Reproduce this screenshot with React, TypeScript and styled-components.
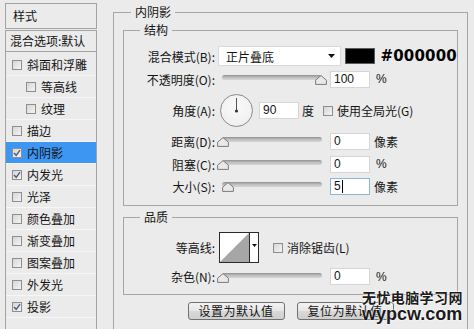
import React from "react";
import styled, { createGlobalStyle } from "styled-components";

const Global = createGlobalStyle`
  html, body { margin: 0; padding: 0; background: #ebebeb; }
  body {
    font-family: "Noto Sans CJK SC", "Liberation Sans", sans-serif;
    font-size: 12px;
    color: #141414;
  }
  #root { width: 474px; height: 329px; overflow: hidden; }
`;

const Page = styled.div`
  position: relative;
  display: flex;
  width: 474px;
  height: 329px;
  overflow: hidden;
  background: #ebebeb;
`;

/* ---------- left style list ---------- */
const Sidebar = styled.div`
  margin: 3px 0 0 5px;
  width: 92px;
  flex-shrink: 0;
  display: flex;
  flex-direction: column;
  gap: 1px;
`;

const SideHeader = styled.div`
  height: 26px;
  box-sizing: border-box;
  border: 1px solid #a3a3a3;
  padding-left: 7px;
  line-height: 23px;
`;

const SideList = styled.div`
  flex: 1;
  border: 1px solid #a3a3a3;
  border-bottom: none;
  height: 320px;
`;

const BlendRow = styled.div`
  height: 20px;
  line-height: 19px;
  padding-left: 4px;
  border-bottom: 1px solid #a3a3a3;
  white-space: nowrap;
`;

const Items = styled.div`
  padding-top: 2px;
`;

const Item = styled.div<{ $indent?: boolean; $active?: boolean }>`
  display: flex;
  align-items: center;
  gap: 5px;
  height: 21px;
  border-bottom: 1px solid #f6f6f6;
  padding-left: ${(p) => (p.$indent ? 20 : 6)}px;
  background: ${(p) => (p.$active ? "#3c96f2" : "transparent")};
  white-space: nowrap;
`;

const BoxWrap = styled.span`
  display: inline-flex;
  width: 10px;
  height: 10px;
  box-sizing: border-box;
  border: 1px solid #8e8e8e;
  background: linear-gradient(135deg, #d6d6d6, #f4f4f4);
  flex-shrink: 0;
  align-items: center;
  justify-content: center;
`;

const Check = ({ on }: { on?: boolean }) => (
  <BoxWrap>
    {on && (
      <svg width="8" height="8" viewBox="0 0 8 8">
        <path d="M1 4 L3.2 6.3 L7 1.2" fill="none" stroke="#4b5c82" strokeWidth="1.4" />
      </svg>
    )}
  </BoxWrap>
);

/* ---------- right panel ---------- */
const Main = styled.div`
  margin: 4px 0 0 16px;
  width: 355px;
  flex-shrink: 0;
`;

const Outer = styled.fieldset`
  margin: 0;
  padding: 2px 9px 0 9px;
  border: 1px solid #a5a5a5;
  height: 360px;
  min-width: 0;
  box-sizing: border-box;
`;

const Legend = styled.legend<{ $ml: number }>`
  padding: 0 4px;
  margin-left: ${(p) => p.$ml}px;
  line-height: 16px;
  font-size: 12px;
`;

const Group = styled.fieldset<{ $mt?: number; $pb: number }>`
  margin: ${(p) => p.$mt ?? 0}px 0 0 0;
  padding: 0 0 ${(p) => p.$pb}px 0;
  border: 1px solid #a5a5a5;
  min-width: 0;
`;

const Row = styled.div<{ $mt: number; $h: number }>`
  display: flex;
  align-items: center;
  margin-top: ${(p) => p.$mt}px;
  height: ${(p) => p.$h}px;
  white-space: nowrap;
`;

const Label = styled.span`
  width: 91px;
  margin-right: 2px;
  text-align: right;
  flex-shrink: 0;
`;

const Select = styled.div`
  margin-left: 1px;
  width: 132px;
  height: 20px;
  box-sizing: border-box;
  display: flex;
  align-items: center;
  background: #fff;
  border: 1px solid #d9d9d9;
  padding-left: 7px;
`;

const Arrow = styled.svg`
  margin-left: auto;
  margin-right: 5px;
`;

const Swatch = styled.div`
  margin-left: 4px;
  width: 33px;
  height: 16px;
  box-sizing: border-box;
  background: #000;
  border: 1px solid #5a5a5a;
`;

const Hex = styled.span`
  margin-left: 5px;
  font-family: "DejaVu Sans", sans-serif;
  font-weight: bold;
  font-size: 15px;
  letter-spacing: 0.2px;
  color: #000;
`;

const SliderBox = styled.div`
  position: relative;
  width: 110px;
  height: 12px;
  flex-shrink: 0;
`;

const Track = styled.div`
  position: absolute;
  left: 5px;
  right: 5px;
  top: 2px;
  height: 5px;
  border-radius: 3px;
  background: linear-gradient(#8f8f8f, #bdbdbd 45%, #d6d6d6);
`;

const ThumbSvg = styled.svg`
  position: absolute;
  top: 2px;
`;

const Slider = ({ pos }: { pos: number }) => (
  <SliderBox>
    <Track />
    <ThumbSvg width="12" height="10" viewBox="0 0 12 10" style={{ left: pos }}>
      <polygon points="6,0.6 11.4,5.2 11.4,9.4 0.6,9.4 0.6,5.2" fill="#e9e9e9" stroke="#7a7a7a" strokeWidth="1" />
    </ThumbSvg>
  </SliderBox>
);

const NumBox = styled.div<{ $ml?: number; $focus?: boolean }>`
  margin-left: ${(p) => p.$ml ?? 3}px;
  width: 40px;
  height: 17px;
  box-sizing: border-box;
  background: #fff;
  border: 1px solid ${(p) => (p.$focus ? "#8cb4dc" : "#d6d6d6")};
  padding-left: 3px;
  font-family: "Liberation Sans", sans-serif;
  font-size: 12px;
  line-height: 15px;
  flex-shrink: 0;
  display: flex;
  align-items: center;
`;

const Caret = styled.span`
  display: inline-block;
  width: 1px;
  height: 13px;
  background: #000;
  margin-left: 1px;
`;

const Unit = styled.span<{ $ml?: number }>`
  margin-left: ${(p) => p.$ml ?? 4}px;
`;

const Pct = styled.span`
  margin-left: 6px;
  font-family: "Liberation Sans", sans-serif;
  font-size: 12px;
`;

const Dial = styled.div`
  margin-left: 3px;
  width: 33px;
  height: 33px;
  box-sizing: border-box;
  border-radius: 50%;
  border: 1px solid #8a8a8a;
  background: radial-gradient(circle at 50% 40%, #fafafa, #ececec);
  position: relative;
  flex-shrink: 0;
`;

const DialSvg = styled.svg`
  display: block;
`;

const CheckRow = styled.span<{ $ml: number }>`
  margin-left: ${(p) => p.$ml}px;
  display: inline-flex;
  align-items: center;
  gap: 4px;
`;

const Contour = styled.div`
  margin-left: 2px;
  width: 40px;
  height: 31px;
  box-sizing: border-box;
  border: 1px solid #2a2a2a;
  display: flex;
  background: #fff;
  flex-shrink: 0;
`;

const ContourGraph = styled.svg`
  display: block;
  border-right: 1px solid #2a2a2a;
`;

const ContourDrop = styled.div`
  flex: 1;
  display: flex;
  justify-content: center;
  padding-top: 11px;
  box-sizing: border-box;
`;

const Buttons = styled.div`
  display: flex;
  justify-content: center;
  gap: 12px;
  margin-top: 7px;
`;

const Button = styled.div`
  width: 97px;
  height: 18px;
  box-sizing: border-box;
  border: 1px solid #707070;
  border-radius: 3px;
  background: linear-gradient(#f3f3f3, #e6e6e6 48%, #d8d8d8 52%, #cfcfcf);
  text-align: center;
  line-height: 16px;
  font-size: 12px;
  letter-spacing: 0.5px;
`;

/* ---------- watermark ---------- */
const Watermark = styled.div`
  position: absolute;
  left: 362px;
  top: 288px;
  display: flex;
  flex-direction: column;
  pointer-events: none;
`;

const WmCn = styled.span`
  font-size: 14px;
  font-weight: bold;
  color: #1b1b1b;
  line-height: 18px;
  letter-spacing: 0.4px;
  text-shadow: 0 0 2px #fff, 0 0 2px #fff;
`;

const WmUrl = styled.span`
  font-family: "Liberation Sans", sans-serif;
  font-size: 18px;
  font-weight: bold;
  color: #1b1b1b;
  line-height: 16px;
  text-shadow: 0 0 2px #fff, 0 0 2px #fff;
`;

const WmFaint = styled.span`
  position: absolute;
  left: -4px;
  top: 24px;
  font-family: "Liberation Sans", sans-serif;
  font-size: 22px;
  font-weight: bold;
  color: rgba(120, 175, 225, 0.35);
  z-index: -1;
  white-space: nowrap;
`;

const WmPink = styled.span`
  color: rgba(225, 110, 170, 0.55);
`;

const sideItems: { t: string; on?: boolean; indent?: boolean; active?: boolean }[] = [
  { t: "斜面和浮雕" },
  { t: "等高线", indent: true },
  { t: "纹理", indent: true },
  { t: "描边" },
  { t: "内阴影", on: true, active: true },
  { t: "内发光", on: true },
  { t: "光泽" },
  { t: "颜色叠加" },
  { t: "渐变叠加" },
  { t: "图案叠加" },
  { t: "外发光" },
  { t: "投影", on: true },
];

export default function App() {
  return (
    <Page>
      <Global />
      <Sidebar>
        <SideHeader>样式</SideHeader>
        <SideList>
          <BlendRow>混合选项:默认</BlendRow>
          <Items>
            {sideItems.map((it) => (
              <Item key={it.t} $indent={it.indent} $active={it.active}>
                <Check on={it.on} />
                <span>{it.t}</span>
              </Item>
            ))}
          </Items>
        </SideList>
      </Sidebar>

      <Main>
        <Outer>
          <Legend $ml={8}>内阴影</Legend>
          <Group $pb={11}>
            <Legend $ml={16}>结构</Legend>
            <Row $mt={8} $h={20}>
              <Label>混合模式(B):</Label>
              <Select>
                正片叠底
                <Arrow width="7" height="4" viewBox="0 0 7 4">
                  <polygon points="0,0 7,0 3.5,4" fill="#111" />
                </Arrow>
              </Select>
              <Swatch />
              <Hex>#000000</Hex>
            </Row>
            <Row $mt={4} $h={18}>
              <Label>不透明度(O):</Label>
              <Slider pos={98} />
              <NumBox>100</NumBox>
              <Pct>%</Pct>
            </Row>
            <Row $mt={6} $h={33}>
              <Label>角度(A):</Label>
              <Dial>
                <DialSvg width="31" height="31" viewBox="0 0 31 31">
                  <line x1="15.5" y1="16" x2="15.5" y2="3" stroke="#555" strokeWidth="1" />
                  <circle cx="15.5" cy="16" r="1.6" fill="#333" />
                </DialSvg>
              </Dial>
              <NumBox $ml={6}>90</NumBox>
              <Unit $ml={3}>度</Unit>
              <CheckRow $ml={9}>
                <Check />
                <span>使用全局光(G)</span>
              </CheckRow>
            </Row>
            <Row $mt={6} $h={16}>
              <Label>距离(D):</Label>
              <Slider pos={0} />
              <NumBox>0</NumBox>
              <Unit>像素</Unit>
            </Row>
            <Row $mt={7} $h={16}>
              <Label>阻塞(C):</Label>
              <Slider pos={0} />
              <NumBox>0</NumBox>
              <Pct>%</Pct>
            </Row>
            <Row $mt={6} $h={16}>
              <Label>大小(S):</Label>
              <Slider pos={5} />
              <NumBox $focus>
                5<Caret />
              </NumBox>
              <Unit>像素</Unit>
            </Row>
          </Group>

          <Group $mt={3} $pb={9}>
            <Legend $ml={16}>品质</Legend>
            <Row $mt={7} $h={31}>
              <Label>等高线:</Label>
              <Contour>
                <ContourGraph width="29" height="29" viewBox="0 0 29 29">
                  <polygon points="0,29 29,0 29,29" fill="#a6a6a6" />
                </ContourGraph>
                <ContourDrop>
                  <svg width="5" height="3" viewBox="0 0 5 3">
                    <polygon points="0,0 5,0 2.5,3" fill="#111" />
                  </svg>
                </ContourDrop>
              </Contour>
              <CheckRow $ml={14}>
                <Check />
                <span>消除锯齿(L)</span>
              </CheckRow>
            </Row>
            <Row $mt={5} $h={17}>
              <Label>杂色(N):</Label>
              <Slider pos={0} />
              <NumBox>0</NumBox>
              <Pct>%</Pct>
            </Row>
          </Group>

          <Buttons>
            <Button>设置为默认值</Button>
            <Button>复位为默认值</Button>
          </Buttons>
        </Outer>
      </Main>

      <Watermark>
        <WmFaint>
          xue.niu.<WmPink>com</WmPink>
        </WmFaint>
        <WmCn>无忧电脑学习网</WmCn>
        <WmUrl>wypcw.com</WmUrl>
      </Watermark>
    </Page>
  );
}
